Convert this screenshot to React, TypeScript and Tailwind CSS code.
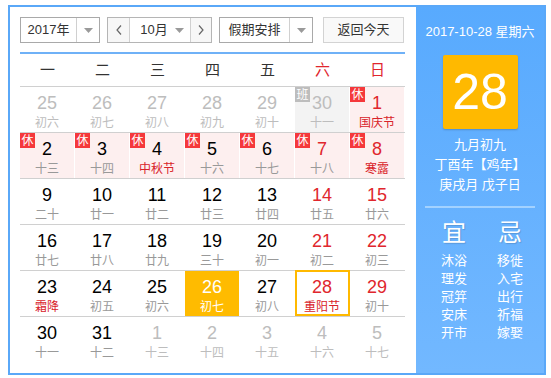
import React from "react";

type Cell = {
  d: string;
  l: string;
  other?: boolean;
  red?: boolean;
  fest?: boolean;
  badge?: "休" | "班";
  pink?: boolean;
  grayBg?: boolean;
  today?: boolean;
  sel?: boolean;
};

const rows: Cell[][] = [
  [
    { d: "25", l: "初六", other: true },
    { d: "26", l: "初七", other: true },
    { d: "27", l: "初八", other: true },
    { d: "28", l: "初九", other: true },
    { d: "29", l: "初十", other: true },
    { d: "30", l: "十一", other: true, badge: "班", grayBg: true },
    { d: "1", l: "国庆节", red: true, fest: true, badge: "休", pink: true },
  ],
  [
    { d: "2", l: "十三", badge: "休", pink: true },
    { d: "3", l: "十四", badge: "休", pink: true },
    { d: "4", l: "中秋节", fest: true, badge: "休", pink: true },
    { d: "5", l: "十六", badge: "休", pink: true },
    { d: "6", l: "十七", badge: "休", pink: true },
    { d: "7", l: "十八", red: true, badge: "休", pink: true },
    { d: "8", l: "寒露", red: true, fest: true, badge: "休", pink: true },
  ],
  [
    { d: "9", l: "二十" },
    { d: "10", l: "廿一" },
    { d: "11", l: "廿二" },
    { d: "12", l: "廿三" },
    { d: "13", l: "廿四" },
    { d: "14", l: "廿五", red: true },
    { d: "15", l: "廿六", red: true },
  ],
  [
    { d: "16", l: "廿七" },
    { d: "17", l: "廿八" },
    { d: "18", l: "廿九" },
    { d: "19", l: "三十" },
    { d: "20", l: "初一" },
    { d: "21", l: "初二", red: true },
    { d: "22", l: "初三", red: true },
  ],
  [
    { d: "23", l: "霜降", fest: true },
    { d: "24", l: "初五" },
    { d: "25", l: "初六" },
    { d: "26", l: "初七", today: true },
    { d: "27", l: "初八" },
    { d: "28", l: "重阳节", red: true, fest: true, sel: true },
    { d: "29", l: "初十", red: true },
  ],
  [
    { d: "30", l: "十一" },
    { d: "31", l: "十二" },
    { d: "1", l: "十三", other: true },
    { d: "2", l: "十四", other: true },
    { d: "3", l: "十五", other: true },
    { d: "4", l: "十六", other: true },
    { d: "5", l: "十七", other: true },
  ],
];

const weekdays = ["一", "二", "三", "四", "五", "六", "日"];

function Arrow() {
  return (
    <svg width="9" height="5" viewBox="0 0 9 5">
      <path d="M0 0 L9 0 L4.5 5 Z" fill="#9a9a9a" />
    </svg>
  );
}

function DayCell({ c }: { c: Cell }) {
  let bg = "bg-white";
  if (c.pink) bg = "bg-[#fdefef]";
  if (c.grayBg) bg = "bg-[#f3f3f3]";
  if (c.today) bg = "bg-[#ffbb00]";
  let numColor = "text-black";
  if (c.red) numColor = "text-[#e0262d]";
  if (c.other) numColor = "text-[#bdbdbd]";
  if (c.today) numColor = "text-white";
  let lunColor = "text-[#999999]";
  if (c.fest) lunColor = "text-[#d9232a]";
  if (c.other) lunColor = "text-[#bdbdbd]";
  if (c.today) lunColor = "text-white";
  return (
    <div className={`relative h-[45px] w-[55px] border-r border-white ${bg}`}>
      {c.sel && (
        <div className="absolute left-0 top-[-1px] h-[46px] w-[55px] border-2 border-[#ffb900]" />
      )}
      {c.badge && (
        <div
          className={`absolute left-0 top-0 flex h-[15px] w-[15px] items-center justify-center text-[12px] leading-none text-white ${
            c.badge === "休" ? "bg-[#f5383b]" : "bg-[#bdbdbd]"
          }`}
        >
          {c.badge}
        </div>
      )}
      <div className="flex flex-col items-center">
        <div
          className={`mt-[6px] h-[21px] text-[18px] leading-[21px] ${numColor}`}
          style={{ fontFamily: '"Liberation Sans", Arial, sans-serif' }}
        >
          {c.d}
        </div>
        <div className={`mt-[1px] text-[12px] leading-[16px] ${lunColor}`}>{c.l}</div>
      </div>
    </div>
  );
}

export default function App() {
  return (
    <div
      className="pl-[8px] pt-[5px]"
      style={{ fontFamily: '"Liberation Sans", "Noto Sans CJK SC", sans-serif' }}
    >
      <div className="flex h-[370px] w-[538px] border-2 border-[#5aa8f8] bg-white">
        {/* left */}
        <div className="w-[406px] pl-[10px] pt-[10px]">
          {/* controls */}
          <div className="flex h-[26px] items-stretch text-[13px] text-[#333]">
            <div className="flex w-[80px] border border-[#a9a9a9]">
              <div className="flex w-[55px] items-center justify-center">2017年</div>
              <div className="flex flex-1 items-center justify-center border-l border-[#d0d0d0]">
                <Arrow />
              </div>
            </div>
            <div className="ml-[7px] flex w-[105px] border border-[#b5b5b5]">
              <div className="flex w-[22px] items-center justify-center border-r border-[#d0d0d0] bg-[#f7f7f7] text-[#555]">
                <svg width="6" height="10" viewBox="0 0 6 10">
                  <path d="M5 0.5 L1 5 L5 9.5" stroke="#666" strokeWidth="1.2" fill="none" />
                </svg>
              </div>
              <div className="flex w-[60px] items-center justify-center gap-[7px] pl-[4px]">
                <span>10月</span>
                <Arrow />
              </div>
              <div className="flex flex-1 items-center justify-center border-l border-[#d0d0d0] bg-[#f7f7f7]">
                <svg width="6" height="10" viewBox="0 0 6 10">
                  <path d="M1 0.5 L5 5 L1 9.5" stroke="#666" strokeWidth="1.2" fill="none" />
                </svg>
              </div>
            </div>
            <div className="ml-[7px] flex w-[94px] border border-[#a9a9a9]">
              <div className="flex w-[69px] items-center justify-center">假期安排</div>
              <div className="flex flex-1 items-center justify-center border-l border-[#d0d0d0]">
                <Arrow />
              </div>
            </div>
            <div className="ml-[10px] flex w-[81px] items-center justify-center border border-[#d3d3d3] bg-[#f9f9f9]">
              返回今天
            </div>
          </div>
          <div className="mt-[9px] h-[2px] w-[385px] bg-[#6fb1f7]" />
          {/* weekday header */}
          <div className="flex h-[33px] w-[385px] border-b border-[#d0d0d0]">
            {weekdays.map((w, i) => (
              <div
                key={w}
                className={`flex w-[55px] items-center justify-center text-[15px] ${
                  i >= 5 ? "text-[#e0262d]" : "text-[#333]"
                }`}
              >
                {w}
              </div>
            ))}
          </div>
          {rows.map((r, ri) => (
            <div
              key={ri}
              className={`flex w-[385px] ${ri < rows.length - 1 ? "border-b border-[#d0d0d0]" : ""}`}
            >
              {r.map((c, ci) => (
                <DayCell key={ci} c={c} />
              ))}
            </div>
          ))}
        </div>
        {/* right panel */}
        <div className="flex w-[128px] flex-col items-center bg-gradient-to-b from-[#58aafe] to-[#72b8ff] pt-[15px] text-white">
          <div className="text-[13px] leading-[20px]">2017-10-28 星期六</div>
          <div
            className="mt-[13px] flex h-[74px] w-[75px] items-center justify-center rounded-[2px] bg-[#ffb900] text-[50px] leading-none shadow-[0_1px_2px_rgba(0,0,0,0.2)]"
            style={{ fontFamily: '"Liberation Sans", Arial, sans-serif' }}
          >
            28
          </div>
          <div className="mt-[6px] text-[13px] leading-[20px]">九月初九</div>
          <div className="text-[13px] leading-[20px]">丁酉年【鸡年】</div>
          <div className="text-[13px] leading-[20px]">庚戌月 戊子日</div>
          <div className="mt-[11px] h-[2px] w-[110px] bg-[#a3d2ff]" />
          <div className="mt-[10px] flex w-full pl-[24px]">
            <div className="flex w-[28px] flex-col items-center">
              <div className="text-[24px] leading-[30px] [text-shadow:1px_1px_1px_rgba(0,0,0,0.15)]">宜</div>
              <div className="mt-[4px] flex flex-col items-center text-[13px] leading-[18px]">
                <span>沐浴</span>
                <span>理发</span>
                <span>冠笄</span>
                <span>安床</span>
                <span>开市</span>
              </div>
            </div>
            <div className="ml-[28px] flex w-[28px] flex-col items-center">
              <div className="text-[24px] leading-[30px] [text-shadow:1px_1px_1px_rgba(0,0,0,0.15)]">忌</div>
              <div className="mt-[4px] flex flex-col items-center text-[13px] leading-[18px]">
                <span>移徙</span>
                <span>入宅</span>
                <span>出行</span>
                <span>祈福</span>
                <span>嫁娶</span>
              </div>
            </div>
          </div>
        </div>
      </div>
    </div>
  );
}
